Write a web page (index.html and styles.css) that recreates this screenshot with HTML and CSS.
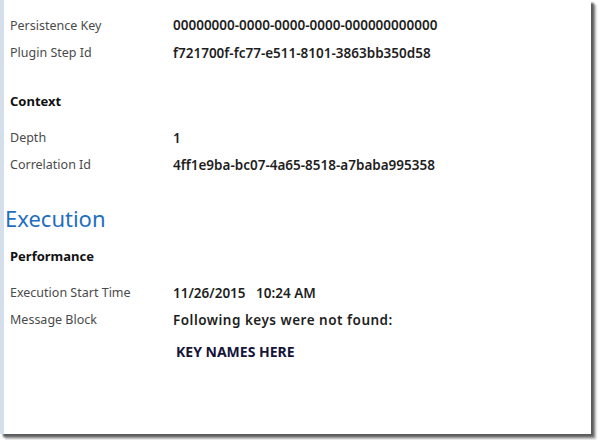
FILE: index.html
```html
<!DOCTYPE html>
<html>
<head>
<meta charset="utf-8">
<link rel="stylesheet" href="styles.css">
</head>
<body>
<div class="frame">
  <div class="content">
    <div class="rows top">
      <div class="row"><span class="label">Persistence Key</span><span class="value">00000000-0000-0000-0000-000000000000</span></div>
      <div class="row"><span class="label">Plugin Step Id</span><span class="value">f721700f-fc77-e511-8101-3863bb350d58</span></div>
    </div>
    <h3 class="sub">Context</h3>
    <div class="rows">
      <div class="row"><span class="label">Depth</span><span class="value">1</span></div>
      <div class="row"><span class="label">Correlation Id</span><span class="value">4ff1e9ba-bc07-4a65-8518-a7baba995358</span></div>
    </div>
    <h2 class="section">Execution</h2>
    <h3 class="sub perf">Performance</h3>
    <div class="rows">
      <div class="row"><span class="label">Execution Start Time</span><span class="value">11/26/2015&nbsp;&nbsp; 10:24 AM</span></div>
      <div class="row"><span class="label">Message Block</span><span class="value msg">Following keys were not found:</span></div>
      <div class="row keyrow"><span class="label"></span><span class="value keys">KEY NAMES HERE</span></div>
    </div>
  </div>
</div>
</body>
</html>
```
FILE: styles.css
```css
html, body {
  margin: 0;
  padding: 0;
  background: #ffffff;
}
body {
  width: 598px;
  height: 440px;
  overflow: hidden;
  font-family: "Noto Sans", "Open Sans", sans-serif;
}
.frame {
  width: 587px;
  height: 434px;
  border-left: 4px solid #d5deeb;
  background: #ffffff;
  box-shadow: 3px 3px 2px 0 #5a5a5a, 5px 5px 2px 0 #b8b8b8;
  box-sizing: content-box;
}
.content {
  padding: 11px 0 0 6px;
}
.rows {
  display: flex;
  flex-direction: column;
}
.row {
  display: grid;
  grid-template-columns: 163px 1fr;
  height: 27px;
  align-items: center;
}
.top .row:first-child {
  height: 28px;
}
.label {
  font-size: 12.5px;
  color: #4a4a4a;
}
.value {
  font-size: 13.5px;
  font-weight: 600;
  color: #1e1e1e;
}
.msg {
  letter-spacing: 0.5px;
}
.keyrow {
  margin-top: 5px;
}
.keys {
  padding-left: 3px;
  font-size: 14px;
  font-weight: 700;
  color: #15153a;
}
.sub {
  margin: 0;
  font-size: 13px;
  font-weight: 700;
  color: #111;
  height: 27px;
  display: flex;
  align-items: center;
  margin-top: 21px;
  margin-bottom: 10px;
}
.section {
  margin: 24px 0 0 -5px;
  font-size: 22px;
  font-weight: 400;
  color: #1f6fc1;
  height: 32px;
  display: flex;
  align-items: center;
}
.perf {
  margin-top: 8px;
  margin-bottom: 10px;
}
```
